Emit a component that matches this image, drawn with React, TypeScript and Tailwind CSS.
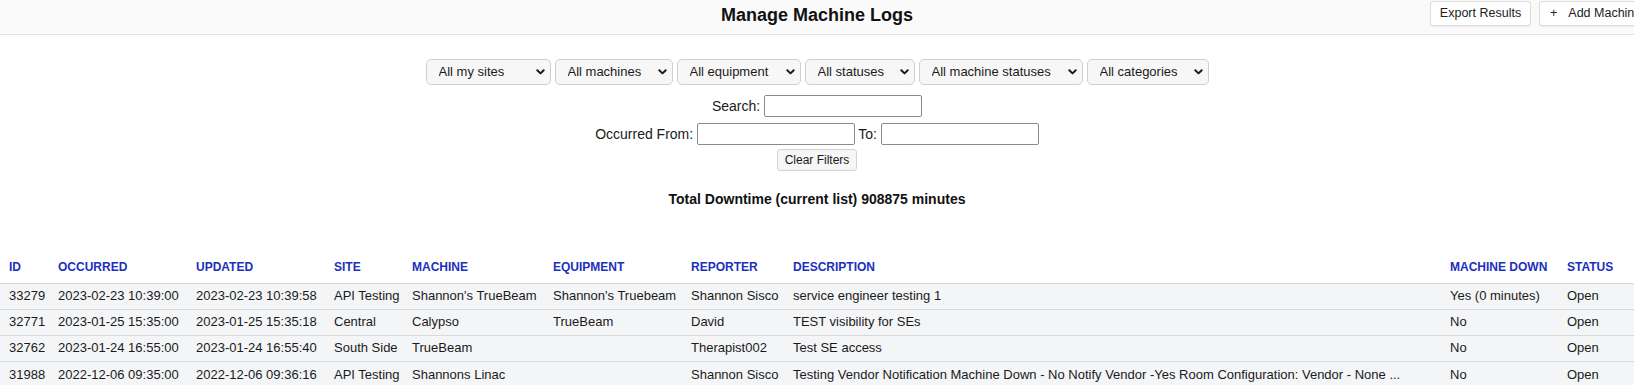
import React from "react";

const selects: { label: string; w: string }[] = [
  { label: "All my sites", w: "w-[125px]" },
  { label: "All machines", w: "w-[118px]" },
  { label: "All equipment", w: "w-[124px]" },
  { label: "All statuses", w: "w-[110px]" },
  { label: "All machine statuses", w: "w-[164px]" },
  { label: "All categories", w: "w-[122px]" },
];

const cols: { h: string; w: string }[] = [
  { h: "ID", w: "w-[49px]" },
  { h: "Occurred", w: "w-[138px]" },
  { h: "Updated", w: "w-[138px]" },
  { h: "Site", w: "w-[78px]" },
  { h: "Machine", w: "w-[141px]" },
  { h: "Equipment", w: "w-[138px]" },
  { h: "Reporter", w: "w-[102px]" },
  { h: "Description", w: "w-[657px]" },
  { h: "Machine Down", w: "w-[117px]" },
  { h: "Status", w: "w-[76px]" },
];

const rows: string[][] = [
  ["33279", "2023-02-23 10:39:00", "2023-02-23 10:39:58", "API Testing", "Shannon's TrueBeam", "Shannon's Truebeam", "Shannon Sisco", "service engineer testing 1", "Yes (0 minutes)", "Open"],
  ["32771", "2023-01-25 15:35:00", "2023-01-25 15:35:18", "Central", "Calypso", "TrueBeam", "David", "TEST visibility for SEs", "No", "Open"],
  ["32762", "2023-01-24 16:55:00", "2023-01-24 16:55:40", "South Side", "TrueBeam", "", "Therapist002", "Test SE access", "No", "Open"],
  ["31988", "2022-12-06 09:35:00", "2022-12-06 09:36:16", "API Testing", "Shannons Linac", "", "Shannon Sisco", "Testing Vendor Notification Machine Down - No Notify Vendor -Yes Room Configuration: Vendor - None ...", "No", "Open"],
];

function Chevron() {
  return (
    <svg width="9" height="6" viewBox="0 0 9 6" className="pointer-events-none absolute right-[6px] top-1/2 -translate-y-1/2">
      <path d="M1.3 1.2 L4.5 4.4 L7.7 1.2" fill="none" stroke="#1a1a1a" strokeWidth="2" strokeLinecap="round" strokeLinejoin="round" />
    </svg>
  );
}

export default function App() {
  return (
    <div className="w-full h-[385px] overflow-hidden bg-white text-[#1a1a1a] font-['Liberation_Sans',Arial,Helvetica,sans-serif]">
      <header className="grid grid-cols-[1fr_auto_1fr] items-start h-[35px] bg-[#fafafa] border-b border-[#e6e3de]">
        <div />
        <h1 className="text-[18px] leading-[30px] font-bold text-[#111]">Manage Machine Logs</h1>
        <div className="flex justify-end gap-[8px] -mr-[41px] mt-[1px]">
          <button className="w-[101px] h-[25px] bg-white border border-[#dcdcdc] rounded-[3px] shadow-[0_1px_1px_rgba(0,0,0,0.06)] text-[12.5px] text-[#222]">
            Export Results
          </button>
          <button className="w-[136px] h-[25px] bg-white border border-[#dcdcdc] rounded-[3px] shadow-[0_1px_1px_rgba(0,0,0,0.06)] text-[12.5px] text-[#222] text-left pl-[10px] flex items-center">
            <span className="mr-[11px]">+</span>
            <span className="whitespace-nowrap">Add Machine Log</span>
          </button>
        </div>
      </header>

      <section className="flex flex-col items-center">
        <div className="mt-[24px] flex gap-[4px] h-[26px]">
          {selects.map((s) => (
            <div key={s.label} className={`relative h-full ${s.w}`}>
              <select
                defaultValue={s.label}
                className="appearance-none w-full h-full pl-[12px] pr-[20px] bg-[#f7f7f7] border border-[#cfcfcf] rounded-[5px] text-[13px] text-[#1a1a1a] outline-none"
              >
                <option>{s.label}</option>
              </select>
              <Chevron />
            </div>
          ))}
        </div>

        <div className="mt-[10px] flex items-center gap-[4px] h-[22px] text-[14px]">
          <label>Search:</label>
          <input type="text" className="w-[158px] h-[22px] border border-[#8a8a8a] rounded-[2px] bg-white outline-none" />
        </div>

        <div className="mt-[6px] flex items-center gap-[4px] h-[22px] text-[14px]">
          <label>Occurred From:</label>
          <input type="text" className="w-[158px] h-[22px] border border-[#8a8a8a] rounded-[2px] bg-white outline-none" />
          <label className="ml-[-1px]">To:</label>
          <input type="text" className="w-[158px] h-[22px] border border-[#8a8a8a] rounded-[2px] bg-white outline-none" />
        </div>

        <div className="mt-[4px] h-[22px] flex">
          <button className="w-[80px] h-[22px] bg-[#f6f6f6] border border-[#d2d2d2] rounded-[3px] text-[12px] text-[#1a1a1a]">
            Clear Filters
          </button>
        </div>

        <p className="mt-[20px] text-[14px] leading-[16px] font-bold text-[#111]">
          Total Downtime (current list) 908875 minutes
        </p>
      </section>

      <table className="mt-[46px] w-full table-fixed border-collapse">
        <thead>
          <tr className="h-[30px]">
            {cols.map((c) => (
              <th
                key={c.h}
                className={`${c.w} pl-[9px] pr-0 pb-[2px] text-left align-middle uppercase font-bold text-[12px] text-[#1c30bd] whitespace-nowrap`}
              >
                {c.h}
              </th>
            ))}
          </tr>
        </thead>
        <tbody>
          {rows.map((r) => (
            <tr key={r[0]} className="h-[26px] bg-[#f4f5f7] border-t border-[#d9d9d9]">
              {r.map((v, i) => (
                <td key={i} className="pl-[9px] pr-0 align-middle text-[13px] text-[#1a1a1a] whitespace-nowrap overflow-hidden">
                  {v}
                </td>
              ))}
            </tr>
          ))}
        </tbody>
      </table>
    </div>
  );
}
